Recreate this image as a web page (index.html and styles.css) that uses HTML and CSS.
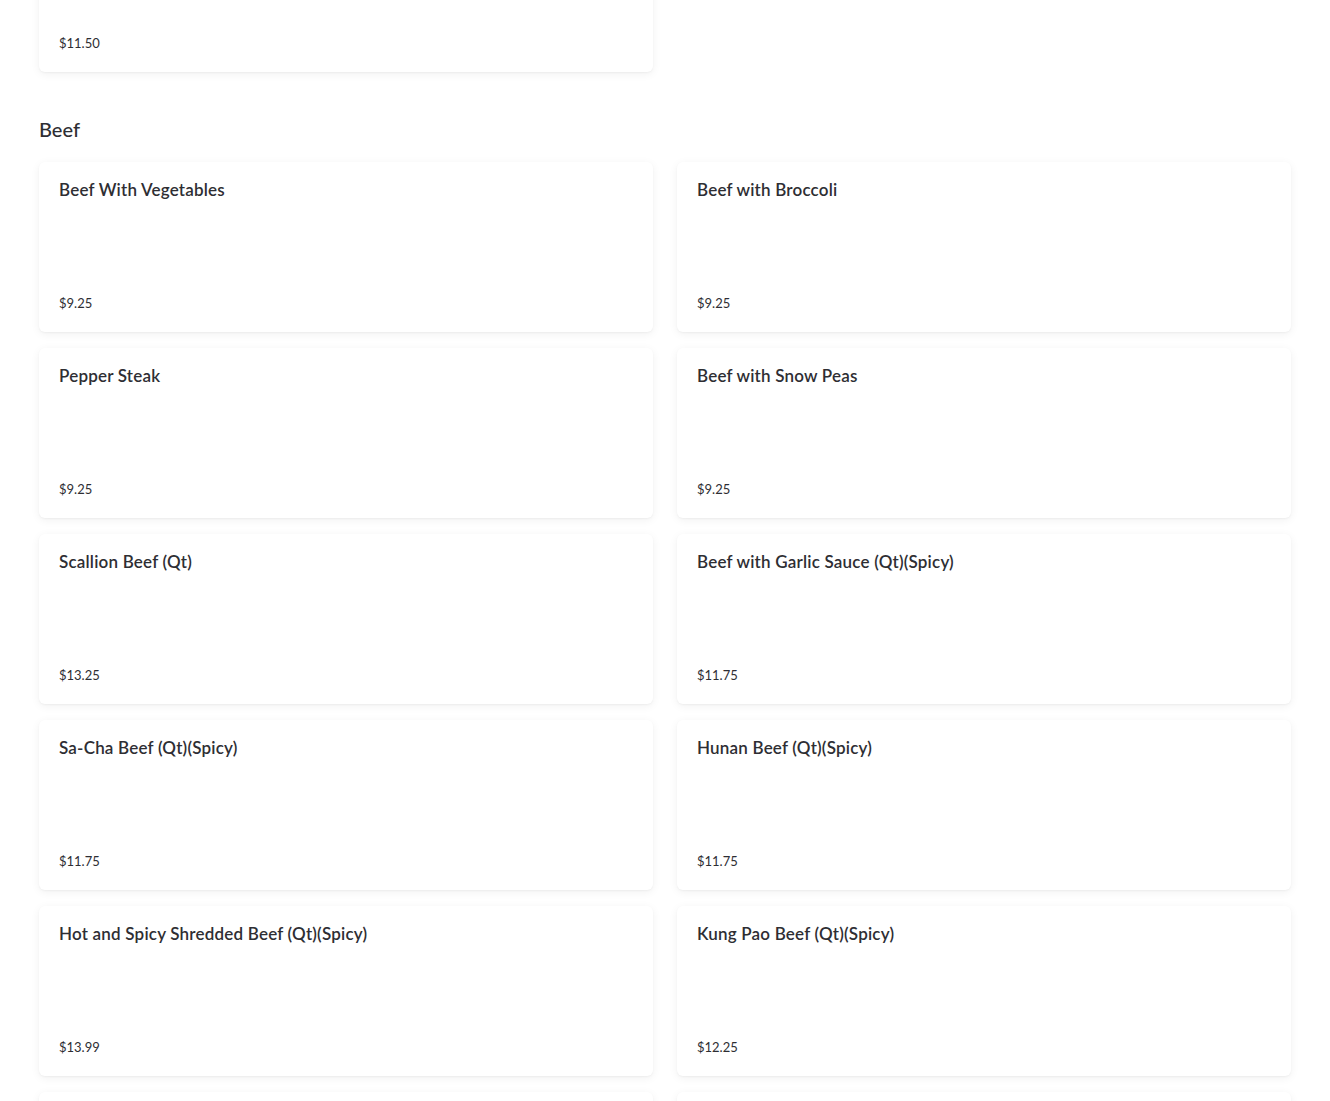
FILE: index.html
```html
<!DOCTYPE html>
<html lang="en">

<head>
    <meta charset="utf-8">
    <meta name="viewport" content="width=device-width, initial-scale=1.0">
    <title>Menu</title>
    <link rel="stylesheet" href="styles.css">
</head>

<body>
    <main class="menu">
        <section class="kategori kategori-forrige">
            <div class="retter">
                <article class="ret">
                    <h3 class="navn"></h3>
                    <p class="pris">$11.50</p>
                </article>
            </div>
        </section>

        <section class="kategori">
            <h2 class="kategori-navn">Beef</h2>
            <div class="retter">
                <article class="ret">
                    <h3 class="navn">Beef With Vegetables</h3>
                    <p class="pris">$9.25</p>
                </article>
                <article class="ret">
                    <h3 class="navn">Beef with Broccoli</h3>
                    <p class="pris">$9.25</p>
                </article>
                <article class="ret">
                    <h3 class="navn">Pepper Steak</h3>
                    <p class="pris">$9.25</p>
                </article>
                <article class="ret">
                    <h3 class="navn">Beef with Snow Peas</h3>
                    <p class="pris">$9.25</p>
                </article>
                <article class="ret">
                    <h3 class="navn">Scallion Beef (Qt)</h3>
                    <p class="pris">$13.25</p>
                </article>
                <article class="ret">
                    <h3 class="navn">Beef with Garlic Sauce (Qt)(Spicy)</h3>
                    <p class="pris">$11.75</p>
                </article>
                <article class="ret">
                    <h3 class="navn">Sa-Cha Beef (Qt)(Spicy)</h3>
                    <p class="pris">$11.75</p>
                </article>
                <article class="ret">
                    <h3 class="navn">Hunan Beef (Qt)(Spicy)</h3>
                    <p class="pris">$11.75</p>
                </article>
                <article class="ret">
                    <h3 class="navn">Hot and Spicy Shredded Beef (Qt)(Spicy)</h3>
                    <p class="pris">$13.99</p>
                </article>
                <article class="ret">
                    <h3 class="navn">Kung Pao Beef (Qt)(Spicy)</h3>
                    <p class="pris">$12.25</p>
                </article>
                <article class="ret"></article>
                <article class="ret"></article>
            </div>
        </section>
    </main>
</body>

</html>
```

FILE: styles.css
```css
html {
    margin: 0;
}

body {
    margin: 0;
    background-color: #fff;
    font-family: 'Lato', 'Open Sans', sans-serif;
    color: #2e2e33;
    overflow: hidden;
}

.menu {
    padding: 0 39px;
}

.kategori-forrige {
    margin-top: -98px;
}

.kategori-navn {
    font-size: 20px;
    font-weight: 500;
    line-height: 28px;
    margin: 43px 0 19px;
    color: #2e2e33;
}

.retter {
    display: grid;
    grid-template-columns: 1fr 1fr;
    column-gap: 24px;
    row-gap: 16px;
}

.ret {
    height: 170px;
    box-sizing: border-box;
    padding: 16px 20px 20px;
    background-color: #fff;
    border-radius: 6px;
    box-shadow: 0 1px 2px rgba(0, 0, 0, .04), 0 2px 10px rgba(0, 0, 0, .06);
    display: flex;
    flex-direction: column;
    justify-content: space-between;
}

.navn {
    margin: 0;
    font-size: 17px;
    font-weight: 600;
    letter-spacing: 0.2px;
    line-height: 24px;
    color: #2e2e33;
}

.pris {
    margin: 0;
    font-size: 13px;
    line-height: 18px;
    color: #2e2e33;
}
```
